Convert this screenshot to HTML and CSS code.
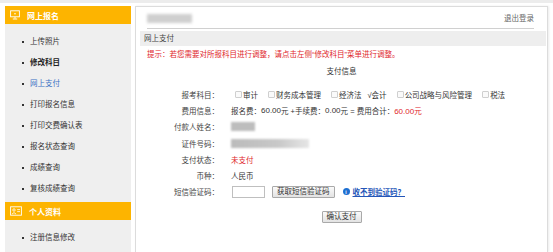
FILE: index.html
```html
<!DOCTYPE html>
<html lang="zh-CN">
<head>
    <meta charset="UTF-8">
    <title>网上支付</title>
    <link rel="stylesheet" href="styles.css">
</head>
<body>
    <div class="topbar"></div>
    <div class="wrap">
        <aside class="sidebar">
            <div class="side-head">
                <svg class="side-icon" viewBox="0 0 10 10" width="10" height="10">
                    <rect x="0.6" y="0.8" width="8.8" height="6" fill="none" stroke="#fff" stroke-width="0.9"/>
                    <line x1="5" y1="6.8" x2="5" y2="8.6" stroke="#fff" stroke-width="0.9"/>
                    <line x1="2.8" y1="9" x2="7.2" y2="9" stroke="#fff" stroke-width="0.9"/>
                    <circle cx="5" cy="3.8" r="0.8" fill="#fff"/>
                </svg>
                网上报名
            </div>
            <ul class="side-menu">
                <li>上传照片</li>
                <li class="bold">修改科目</li>
                <li class="active">网上支付</li>
                <li>打印报名信息</li>
                <li>打印交费确认表</li>
                <li>报名状态查询</li>
                <li>成绩查询</li>
                <li>复核成绩查询</li>
            </ul>
            <div class="side-head second">
                <svg class="side-icon" viewBox="0 0 12 10" width="12" height="10">
                    <rect x="0.6" y="0.8" width="10.8" height="8.4" fill="none" stroke="#fff" stroke-width="0.9"/>
                    <circle cx="4" cy="4" r="1.2" fill="none" stroke="#fff" stroke-width="0.8"/>
                    <path d="M2 8 Q4 5.2 6 8" fill="none" stroke="#fff" stroke-width="0.8"/>
                    <line x1="7.2" y1="3.6" x2="10" y2="3.6" stroke="#fff" stroke-width="0.8"/>
                    <line x1="7.2" y1="5.6" x2="10" y2="5.6" stroke="#fff" stroke-width="0.8"/>
                </svg>
                个人资料
            </div>
            <ul class="side-menu last">
                <li>注册信息修改</li>
            </ul>
        </aside>

        <main class="panel">
            <div class="panel-top">
                <span class="user-name"></span>
                <a class="logout">退出登录</a>
            </div>
            <div class="section-title">网上支付</div>
            <p class="tip">提示：若您需要对所报科目进行调整，请点击左侧“修改科目”菜单进行调整。</p>
            <div class="pay-title">支付信息</div>

            <div class="pay-form">
                <div class="row">
                    <span class="label">报考科目：</span>
                    <div class="value subjects">
                        <span class="subj"><i class="chk"></i>审计</span>
                        <span class="subj"><i class="chk"></i>财务成本管理</span>
                        <span class="subj"><i class="chk"></i>经济法</span>
                        <span class="subj checked">√会计</span>
                        <span class="subj"><i class="chk"></i>公司战略与风险管理</span>
                        <span class="subj"><i class="chk"></i>税法</span>
                    </div>
                </div>
                <div class="row">
                    <span class="label">费用信息：</span>
                    <div class="value">报名费：<span class="num">60.00</span>元 +手续费：<span class="num">0.00</span>元 = 费用合计：<span class="red"><span class="num">60.00</span>元</span></div>
                </div>
                <div class="row">
                    <span class="label">付款人姓名：</span>
                    <div class="value"><span class="masked short"></span></div>
                </div>
                <div class="row">
                    <span class="label">证件号码：</span>
                    <div class="value"><span class="masked long"></span></div>
                </div>
                <div class="row">
                    <span class="label">支付状态：</span>
                    <div class="value red">未支付</div>
                </div>
                <div class="row">
                    <span class="label">币种：</span>
                    <div class="value">人民币</div>
                </div>
                <div class="row">
                    <span class="label">短信验证码：</span>
                    <div class="value sms">
                        <input type="text" class="sms-input">
                        <button type="button" class="btn sms-btn">获取短信验证码</button>
                        <span class="info-icon">i</span>
                        <a class="sms-link">收不到验证码？</a>
                    </div>
                </div>
            </div>

            <div class="submit">
                <button type="button" class="btn">确认支付</button>
            </div>
        </main>
    </div>
</body>
</html>
```

FILE: styles.css
```css
body {
    margin: 0;
    padding: 0;
    font-family: "Liberation Sans", "Noto Sans CJK SC", sans-serif;
    font-size: 7.5px;
    color: #333;
    background: #fff;
    height: 252px;
    overflow: hidden;
}

.topbar {
    height: 3px;
    background: #ececec;
}

.wrap {
    display: flex;
    gap: 4px;
    margin: 3px 5px 0 5px;
    height: 246px;
}

/* sidebar */
.sidebar {
    width: 126px;
    flex-shrink: 0;
    background: #efefef;
}

.side-head {
    height: 18px;
    display: flex;
    align-items: center;
    gap: 7px;
    padding-left: 4px;
    background: #fdb400;
    color: #fff;
    font-size: 8px;
    font-weight: bold;
}

.side-head.second {
    margin-top: 3px;
}

.side-icon {
    display: block;
    margin-left: 1px;
}

.side-menu {
    list-style: none;
    margin: 7px 0 0 0;
    padding: 0;
}

.side-menu li {
    position: relative;
    height: 21px;
    line-height: 21px;
    padding-left: 25px;
    color: #333;
}

.side-menu li::before {
    content: "";
    position: absolute;
    left: 17px;
    top: 10px;
    width: 2px;
    height: 2px;
    background: #333;
}

.side-menu li.bold {
    font-weight: bold;
    color: #222;
}

.side-menu li.active {
    color: #3a6fc4;
}

/* main panel */
.panel {
    flex: 1;
    border: 1px solid #dcdcdc;
    border-bottom: none;
    box-shadow: 1px 0 2px rgba(0, 0, 0, 0.08);
}

.panel-top {
    height: 21px;
    margin: 0 13px 0 11px;
    border-bottom: 1px solid #d0d0d0;
    display: flex;
    align-items: center;
    justify-content: space-between;
}

.user-name {
    display: block;
    width: 45px;
    height: 9px;
    margin-top: 1px;
    background: #cfcfcf;
    filter: blur(1.5px);
}

.logout {
    color: #666;
}

.section-title {
    height: 15px;
    line-height: 15px;
    margin: 2px 1px 0 4px;
    padding-left: 4px;
    background: #eeeeee;
    color: #444;
}

.tip {
    margin: 3px 0 0 0;
    padding-left: 11px;
    line-height: 12px;
    color: #e0262b;
}

.pay-title {
    margin-top: 5px;
    line-height: 12px;
    text-align: center;
    color: #333;
}

.pay-form {
    margin-top: 8px;
}

.row {
    display: flex;
    align-items: center;
    height: 16.3px;
    gap: 12px;
}

.label {
    width: 83px;
    text-align: right;
    color: #444;
}

.value {
    display: flex;
    align-items: center;
    white-space: pre;
}

.num {
    font-size: 8px;
}

.subjects {
    gap: 10px;
    margin-left: 4px;
}

.subj {
    display: flex;
    align-items: center;
    gap: 1px;
}

.subj.checked {
    margin-left: -4px;
}

.chk {
    display: inline-block;
    width: 5px;
    height: 5px;
    border: 1px solid #cfcfcf;
    border-radius: 1px;
    background: #fafafa;
}

.red {
    color: #e0262b;
}

.masked {
    display: block;
    height: 9px;
    background: #bdbdbd;
    filter: blur(1.2px);
}

.masked.short {
    width: 24px;
}

.masked.long {
    width: 78px;
    background: linear-gradient(to right, #bbb, #c8c8c8 60%, #e6e6e6);
}

.sms-input {
    width: 31px;
    height: 10px;
    margin: 0 0 0 1px;
    padding: 0;
    border: 1px solid #bfbfbf;
    background: #fff;
}

.btn {
    height: 12px;
    margin: 0;
    padding: 0 4px;
    font-family: inherit;
    font-size: 7.5px;
    line-height: 10px;
    color: #333;
    border: 1px solid #a9a9a9;
    border-radius: 1px;
    background: linear-gradient(#fafafa, #e3e3e3);
}

.sms-btn {
    margin-left: 7px;
}

.info-icon {
    display: inline-flex;
    align-items: center;
    justify-content: center;
    width: 7px;
    height: 7px;
    margin-left: 8px;
    border-radius: 50%;
    background: #1d6fd1;
    color: #fff;
    font-size: 5px;
    font-weight: bold;
}

.sms-link {
    margin-left: 3px;
    color: #2456b8;
    font-weight: bold;
    text-decoration: underline;
}

.submit {
    display: flex;
    justify-content: center;
    margin-top: 11px;
}
```
